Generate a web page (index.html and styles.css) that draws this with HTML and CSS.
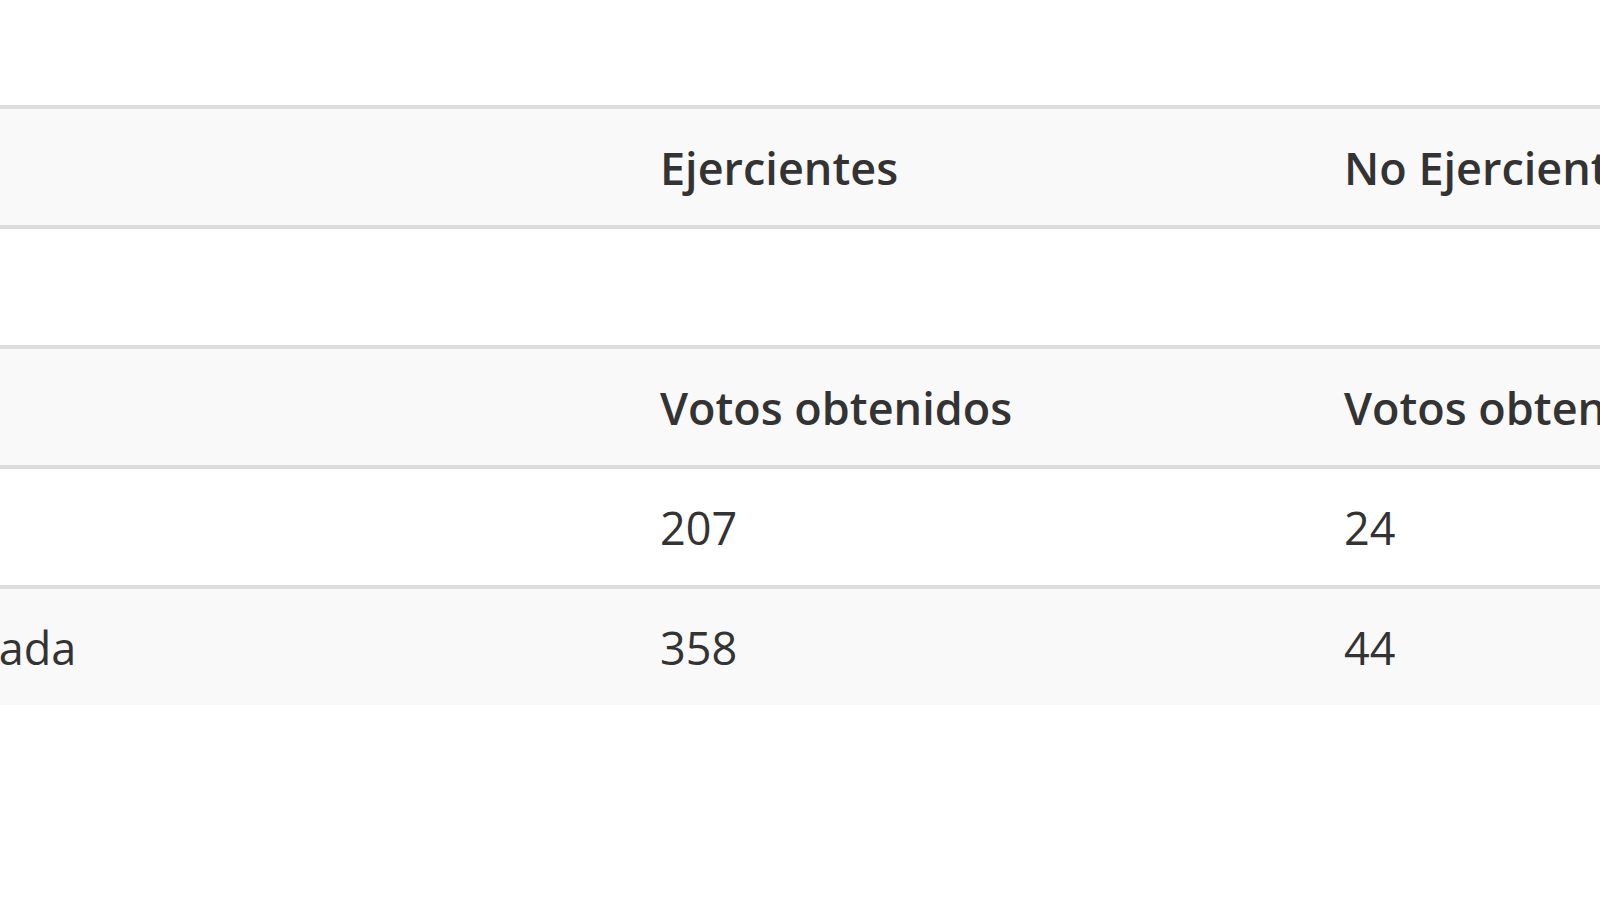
FILE: index.html
```
<!DOCTYPE html>
<html lang="es">
<head>
    <meta charset="utf-8" />
    <title>Resultados</title>
    <link rel="stylesheet" href="styles.css">
</head>
<body>
    <table class="results">
        <colgroup>
            <col class="col_name" />
            <col class="col_votes" />
            <col class="col_votes" />
        </colgroup>
        <tr class="head">
            <th></th>
            <th>Ejercientes</th>
            <th>No Ejercientes</th>
        </tr>
        <tr class="blank">
            <td></td>
            <td></td>
            <td></td>
        </tr>
        <tr class="head">
            <th></th>
            <th>Votos obtenidos</th>
            <th>Votos obtenidos</th>
        </tr>
        <tr>
            <td>Loja</td>
            <td>207</td>
            <td>24</td>
        </tr>
        <tr class="striped">
            <td>Granada</td>
            <td>358</td>
            <td>44</td>
        </tr>
    </table>
</body>
</html>
```
FILE: styles.css
```
body {
    margin: 0;
    padding-top: 105px;
    overflow: hidden;
    background-color: #fff;
    font-family: "Open Sans", "Liberation Sans", sans-serif;
    color: #333;
}

.results {
    table-layout: fixed;
    width: 2133px;
    margin-left: -131px;
    border-collapse: collapse;
    font-size: 45px;
}

.col_name {
    width: 765px;
}

.col_votes {
    width: 684px;
}

.results th,
.results td {
    height: 116px;
    padding: 0 26px;
    border-top: 4px solid #dcdcdc;
    text-align: left;
    vertical-align: middle;
    white-space: nowrap;
    overflow: hidden;
}

.results th {
    font-weight: 600;
}

.head,
.striped {
    background-color: #f9f9f9;
}
```
